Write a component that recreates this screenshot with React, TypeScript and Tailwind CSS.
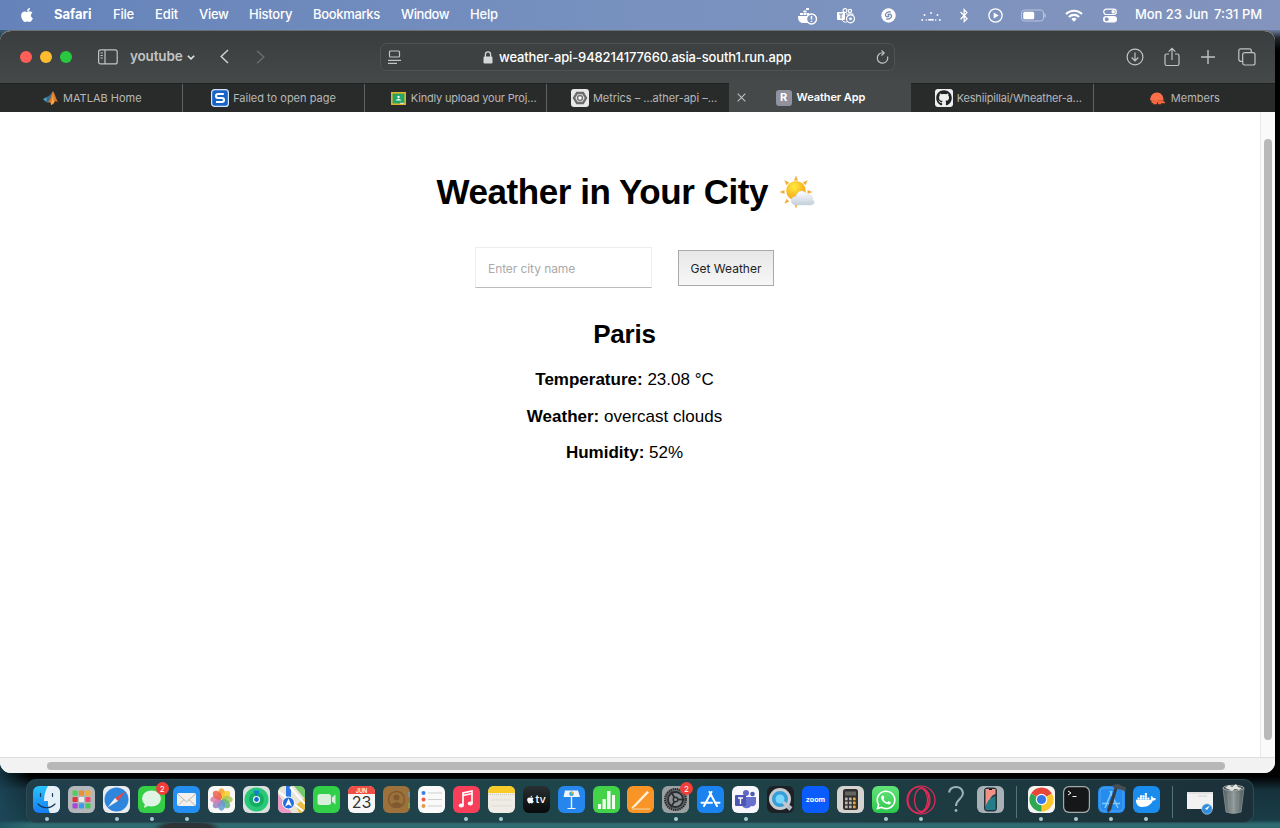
import type { ReactNode } from 'react';
import { FaApple, FaBluetoothB, FaDocker, FaGithub, FaWhatsapp } from 'react-icons/fa';

const menus = [
  { label: 'Safari', cls: 'w-[38px] font-bold' },
  { label: 'File', cls: 'w-[21px] tracking-[-0.2px]' },
  { label: 'Edit', cls: 'w-[23px] tracking-[-0.1px]' },
  { label: 'View', cls: 'w-[29px] tracking-[-0.3px]' },
  { label: 'History', cls: 'w-[43px] tracking-[-0.22px]' },
  { label: 'Bookmarks', cls: 'w-[67px] tracking-[-0.33px]' },
  { label: 'Window', cls: 'w-[48px] tracking-[-0.4px]' },
  { label: 'Help', cls: 'w-[27px] tracking-[-0.2px]' },
];

function MenuBar() {
  return (
    <header className="flex h-[30px] shrink-0 items-center bg-linear-to-r from-[#6583ba] via-[#7891bf] to-[#8394bd] text-[13px] font-medium text-white">
      <FaApple className="ml-[19px] mr-[19px] size-[16px]" />
      <nav className="flex gap-[21px]">
        {menus.map((m) => (
          <span key={m.label} className={`whitespace-nowrap ${m.cls}`}>{m.label}</span>
        ))}
      </nav>
      <div className="ml-auto flex items-center">
        <svg className="mr-[19px] mt-[2px] h-[17px] w-[21px]" viewBox="0 0 21 17">
          <path d="M1 8h12l1-1 2 1-3 5-3 2H5c-3-1-4-3-4-7zM3 5h3v2H3zM6.5 5h3v2h-3zM6.5 2.5h3v2h-3zM10 5h2v2h-2zM9 0h3v2H9z" fill="#fff" />
          <circle cx="14.500" cy="11" r="5" fill="#8095bf" stroke="#fff" strokeWidth="1.400" />
          <path d="M14.500 8v3.600M14.500 12.800v1.200" stroke="#fff" strokeWidth="1.400" />
        </svg>
        <svg className="mr-[25px] mt-[2px] h-[16px] w-[19px]" viewBox="0 0 19 16">
          <rect x="0" y="4" width="8" height="8" rx="1" fill="#fff" />
          <path d="M2 6h4M4 6v4.500" stroke="#8095bf" strokeWidth="1.200" />
          <circle cx="8" cy="2.600" r="1.900" fill="none" stroke="#fff" strokeWidth="1.200" />
          <circle cx="13" cy="3" r="1.600" fill="none" stroke="#fff" strokeWidth="1.200" />
          <path d="M9 6h7v3M5 12c1 2 3 2.500 5 2" fill="none" stroke="#fff" />
          <circle cx="13.500" cy="10.800" r="4" fill="#8095bf" stroke="#fff" strokeWidth="1.200" />
          <circle cx="13.500" cy="10.800" r="1.400" fill="#fff" />
        </svg>
        <svg className="mr-[25px] mt-[1px] size-[15px]" viewBox="0 0 15 15">
          <circle cx="7.500" cy="7.500" r="7.200" fill="#fff" />
          <path d="M9.500 4C7 3.200 3.800 5.500 4.500 7.600c.7 1.600 2.500 1.600 3.500.4M5.500 11c2.500.8 5.700-1.500 5-3.600C9.800 5.800 8 5.800 7 7" fill="none" stroke="#7286ad" strokeWidth="1.200" strokeLinecap="round" />
        </svg>
        <svg className="mr-[17px] mt-[2px] h-[12px] w-[20px]" viewBox="0 0 20 12" fill="#fff">
          <circle cx="3.500" cy="5" r=".95" /><circle cx="1.200" cy="10" r=".95" /><circle cx="10" cy="3" r=".95" /><circle cx="16.500" cy="5" r=".95" /><circle cx="18.800" cy="10" r=".95" /><circle cx="5.300" cy="10" r=".8" /><circle cx="14.700" cy="10" r=".8" /><rect x="7.300" y="9" width="5.400" height="1.600" />
        </svg>
        <FaBluetoothB className="mr-[18px] h-[15px] w-[12px]" />
        <svg className="mr-[18px] size-[15px]" viewBox="0 0 15 15">
          <circle cx="7.500" cy="7.500" r="6.600" fill="none" stroke="#fff" strokeWidth="1.300" />
          <path d="M5.700 4.500l5 3-5 3z" fill="#fff" />
        </svg>
        <svg className="mr-[19px] h-[13px] w-[25px]" viewBox="0 0 25 13">
          <rect x=".5" y="1" width="22" height="11" rx="3" fill="none" stroke="#b9c4dc" />
          <rect x="2.200" y="2.700" width="11" height="7.600" rx="1.500" fill="#fff" />
          <path d="M24 4.700v3.600" stroke="#c4cde1" strokeWidth="1.200" />
        </svg>
        <svg className="mr-[20px] h-[13px] w-[18px]" viewBox="0 0 18 13">
          <path d="M1 5a11.500 11.500 0 0 1 16 0M3.900 7.900a7.400 7.400 0 0 1 10.200 0" fill="none" stroke="#fff" strokeWidth="2.100" />
          <path d="M6.300 10a4 4 0 0 1 5.400 0L9 12.800z" fill="#fff" />
        </svg>
        <svg className="mr-[18px] h-[15px] w-[14px]" viewBox="0 0 14 15">
          <rect x=".7" y="1.200" width="12.600" height="5.300" rx="2.650" fill="none" stroke="#fff" strokeWidth="1.200" />
          <circle cx="10.200" cy="3.850" r="1.800" fill="#fff" />
          <rect x="0" y="8" width="14" height="6.500" rx="3.250" fill="#fff" />
          <circle cx="3.700" cy="11.250" r="1.900" fill="#8394bd" />
        </svg>
        <span className="w-[79px] whitespace-nowrap tracking-[-0.05px]">Mon 23 Jun</span>
        <span className="mr-[16px] w-[50px] whitespace-nowrap">7:31 PM</span>
      </div>
    </header>
  );
}

function Toolbar() {
  return (
    <div className="flex h-[52px] shrink-0 items-center bg-[linear-gradient(#3a3d3d,#454949)] text-[#c2c4c4]">
      <div className="ml-[20px] flex gap-[8px]">
        <i className="size-[12px] rounded-full bg-[#ff5f57]" />
        <i className="size-[12px] rounded-full bg-[#febc2e]" />
        <i className="size-[12px] rounded-full bg-[#28c840]" />
      </div>
      <svg className="ml-[26px] h-[16px] w-[20px]" viewBox="0 0 20 16" fill="none" stroke="currentColor" strokeWidth="1.200">
        <rect x=".6" y=".9" width="18.600" height="14" rx="2" />
        <path d="M7 1v14M2.500 4h2.300M2.500 6.500h2.300M2.500 9h2.300" />
      </svg>
      <span className="ml-[12px] mt-[-1px] w-[53px] whitespace-nowrap text-[13.500px] font-semibold tracking-[-0.15px]">youtube</span>
      <svg className="ml-[4px] mt-[1px] h-[5px] w-[8px]" viewBox="0 0 8 5" fill="none" stroke="#e1e2e2" strokeWidth="1.600"><path d="M.8.7L4 3.900 7.200.7" /></svg>
      <svg className="ml-[25px] mt-[-1px] h-[15px] w-[9px]" viewBox="0 0 9 15" fill="none" stroke="#d0d2d2" strokeWidth="1.500"><path d="M8 1L1.200 7.500 8 14" /></svg>
      <svg className="ml-[27px] mt-[-1px] h-[14px] w-[9px]" viewBox="0 0 9 14" fill="none" stroke="#6a6d6d" strokeWidth="1.500"><path d="M1 .8L7.800 7 1 13.200" /></svg>
      <div className="ml-[115px] flex h-[28px] w-[515px] items-center rounded-[7px] border border-[#505353] bg-[#3d4141]">
        <svg className="ml-[7px] h-[15px] w-[13px]" viewBox="0 0 13 15" fill="none" stroke="currentColor" strokeWidth="1.200"><rect x="1.500" y="1" width="10" height="6" rx="1" /><path d="M0 10.300h13M0 13.300h9" /></svg>
        <svg className="ml-[82px] h-[13px] w-[10px]" viewBox="0 0 10 13"><rect x=".5" y="5.500" width="9" height="7" rx="1.200" fill="#d6d7d7" /><path d="M2.400 6V3.500a2.600 2.600 0 0 1 5.200 0V6" fill="none" stroke="#d6d7d7" strokeWidth="1.300" /></svg>
        <span className="ml-[6px] mt-px w-[293px] whitespace-nowrap text-[13px] font-medium tracking-[-0.145px] text-white">weather-api-948214177660.asia-south1.run.app</span>
        <svg className="ml-auto mr-[5px] h-[15px] w-[13px]" viewBox="0 0 13 15" fill="none" stroke="currentColor" strokeWidth="1.200"><path d="M11.500 6.500a5.200 5.200 0 1 1-4.500-3.700M5.500.4L8.200 2.900 5.500 5.500" /></svg>
      </div>
      <svg className="ml-[231px] size-[18px]" viewBox="0 0 18 18" fill="none" stroke="currentColor" strokeWidth="1.200"><circle cx="9" cy="9" r="7.900" /><path d="M9 4.500v8.300M5.700 9.500L9 12.800l3.300-3.300" /></svg>
      <svg className="ml-[20px] mt-[-1px] h-[20px] w-[16px]" viewBox="0 0 16 20" fill="none" stroke="currentColor" strokeWidth="1.200"><path d="M5 7H2.800Q1 7 1 8.800v7.900q0 1.800 1.800 1.800h10.400q1.800 0 1.800-1.800V8.800Q15 7 13.200 7H11M8 13V1.500M4.700 4.700L8 1.400l3.300 3.300" /></svg>
      <svg className="ml-[21px] size-[14px]" viewBox="0 0 14 14" fill="none" stroke="currentColor" strokeWidth="1.400"><path d="M7 0v14M0 7h14" /></svg>
      <svg className="ml-[23px] size-[18px]" viewBox="0 0 18 18" fill="none" stroke="currentColor" strokeWidth="1.200"><rect x="4.700" y="4.700" width="12.300" height="12.300" rx="2" /><path d="M4.500 13.300H2.800Q.8 13.300.8 11.300V2.800Q.8.8 2.800.8h8.500q2 0 2 2v1.700" /></svg>
    </div>
  );
}

const tabs: { text: string; pad: string; cls: string; icon: ReactNode; active?: boolean }[] = [
  {
    text: 'MATLAB Home', pad: 'pl-[43px]', cls: 'ml-[5px]',
    icon: <svg className="size-[15px]" viewBox="0 0 15 15"><path d="M0 8l4-2 2 2-3 3z" fill="#4ea0c6" /><path d="M4 6l3-2 3-4-2 10-3 2-2-1z" fill="#376c8e" /><path d="M10 0c2 3 3 8 5 11-2-1-3-1-4 1-1 1-2 2-3 2 0-2-1-3-3-3 3-2 3-8 5-11z" fill="#dd752a" /><path d="M10 1l1 11-3 2c0-4 2-8 2-13z" fill="#f0ad42" /></svg>,
  },
  {
    text: 'Failed to open page', pad: 'pl-[28px]', cls: 'ml-[4px]',
    icon: <svg className="size-[18px]" viewBox="0 0 18 18"><rect x=".6" y=".6" width="16.800" height="16.800" rx="3" fill="#1763c8" stroke="#d5e4f8" strokeWidth="1.200" /><path d="M12.800 5H7Q5 5 5 7t2 2h4q2 0 2 2t-2 2H5" fill="none" stroke="#fff" strokeWidth="2.100" /></svg>,
  },
  {
    text: 'Kindly upload your Proj…', pad: 'pl-[25.500px]', cls: 'ml-[5px] tracking-[-0.18px]',
    icon: <svg className="h-[13px] w-[15px]" viewBox="0 0 15 13"><rect x=".8" y=".8" width="13.400" height="11.400" fill="#25a567" stroke="#edb927" strokeWidth="1.500" /><circle cx="7.500" cy="5" r="1.200" fill="#fff" /><path d="M4.500 8.500q3-3.500 6 0z" fill="#e5fff1" /><path d="M9 11.300h4" stroke="#e5e5e5" /></svg>,
  },
  {
    text: 'Metrics – …ather-api –…', pad: 'pl-[23.500px]', cls: 'ml-[4px] tracking-[-0.05px]',
    icon: <svg className="size-[18px]" viewBox="0 0 18 18"><rect width="18" height="18" rx="3" fill="#e8e8e8" /><path d="M6 4h6l3 5-3 5H6L3 9z" fill="none" stroke="#6d6d6d" strokeWidth="2.400" /><circle cx="9" cy="9" r="2.400" fill="#fff" stroke="#777" strokeWidth="1.500" /></svg>,
  },
  {
    text: 'Weather App', pad: 'pl-[30px]', cls: 'ml-[5px] font-semibold tracking-[-0.08px] text-white', active: true,
    icon: <span className="flex size-[16px] items-center justify-center rounded-[3px] bg-[#92929e] text-[11px] font-bold text-white">R</span>,
  },
  {
    text: 'Keshiipillai/Wheather-a…', pad: 'pl-[24px]', cls: 'ml-[4px] tracking-[-0.18px]',
    icon: <span className="flex size-[18px] items-center justify-center rounded-[3px] bg-[#eee]"><FaGithub className="size-[16px] text-[#202326]" /></span>,
  },
  {
    text: 'Members', pad: 'pl-[56px]', cls: 'ml-[6px]',
    icon: <svg className="h-[13px] w-[15px]" viewBox="0 0 15 13"><path d="M.2 8.500C0 3.500 3 .4 7 .4c4 0 6.500 3 6.500 8z" fill="#ff704a" /><path d="M1.500 8h7v2.500H7V12.300H3v-1.300H1.500zM8.500 8.500h5v1.200h1.500V11.300H11v1H8v-1.500h.5z" fill="#f0663f" /></svg>,
  },
];

function Tabs() {
  return (
    <div className="grid h-[29px] w-[1275px] shrink-0 grid-cols-7 text-[11px] font-normal text-[#b6b8b8]">
      {tabs.map((t, i) => (
        <div key={t.text} className={`flex items-center ${t.active ? 'bg-[#454949]' : 'border-t border-[#202222] bg-[#292b2b]'}`}>
          {i !== 0 && i !== 4 && i !== 5 && <i className="h-full w-px shrink-0 bg-[#606363]" />}
          {t.active && <svg className="ml-[8px] size-[9px]" viewBox="0 0 9 9"><path d="M.7.7l7.600 7.600M8.300.7L.7 8.300" stroke="#bfc1c1" strokeWidth="1.100" /></svg>}
          <div className={`flex flex-1 items-center ${t.pad}`}>
            {t.icon}
            <span className={`whitespace-nowrap ${t.cls}`}>{t.text}</span>
          </div>
        </div>
      ))}
    </div>
  );
}

function PartlySunny() {
  const rays = [0, 45, 90, 135, 180, 225, 270, 315];
  return (
    <svg className="h-[34px] w-[36px]" viewBox="0 0 36 34">
      <defs>
        <radialGradient id="sun" cx=".4" cy=".3"><stop stopColor="#ffed3e" /><stop offset="1" stopColor="#f9b421" /></radialGradient>
        <linearGradient id="cloud" x2="0" y2="1"><stop stopColor="#fff" /><stop offset="1" stopColor="#c3cfdb" /></linearGradient>
      </defs>
      {rays.map((r) => <path key={r} d="M15 5.500l2-5 2 5z" fill="#f1ae3c" transform={`rotate(${r} 17 17)`} />)}
      <circle cx="17" cy="15.800" r="9.800" fill="url(#sun)" />
      <path d="M17 30c-6.500 0-6.500-8.500 0-8.500 1-6.500 9.500-7.500 10.500-1 4-2 7 1 6 4.500 3 1 2 5-2 5z" fill="url(#cloud)" stroke="#d3dce5" strokeWidth=".5" />
    </svg>
  );
}

function WeatherPage() {
  return (
    <main className="flex h-[645px] w-[1261px] flex-col items-center border-r border-[#e9e9e9] bg-white pr-[11px] font-['Liberation_Sans',Arial,sans-serif] text-black">
      <div className="mt-[58px] ml-[2px] flex h-[44px] items-center">
        <h1 className="w-[342px] whitespace-nowrap text-[35px] leading-[44px] font-bold tracking-[-0.44px]">Weather in Your City</h1>
        <PartlySunny />
      </div>
      <form className="mt-[33px] flex items-center font-[Inter] text-[12px]">
        <input aria-label="City" placeholder="Enter city name" className="h-[41px] w-[177px] border border-[#ededed] border-b-[#bcbcbc] px-[12px] pt-[2px] tracking-[-0.08px] outline-none placeholder:text-[#aaa]" />
        <button type="button" className="ml-[26px] h-[36px] w-[96px] border border-[#aaa] bg-linear-to-b from-[#e7e7e7] to-[#f7f7f7] pt-[2px] whitespace-nowrap text-[#222]">Get Weather</button>
      </form>
      <h2 className="mt-[31px] text-[26px] leading-[30px] font-bold tracking-[-0.2px]">Paris</h2>
      <p className="mt-[21px] text-[17px] leading-[20px]"><b>Temperature:</b> 23.08 °C</p>
      <p className="mt-[17px] text-[17px] leading-[20px]"><b>Weather:</b> overcast clouds</p>
      <p className="mt-[16px] text-[17px] leading-[20px]"><b>Humidity:</b> 52%</p>
    </main>
  );
}

function Base({ fill, children }: { fill: string; children?: ReactNode }) {
  return (
    <svg className="size-[27px]" viewBox="0 0 27 27">
      <rect width="27" height="27" rx="6" fill={fill} />
      {children}
    </svg>
  );
}

const petals = ['#f6a026', '#f4ce2d', '#abc850', '#64b67b', '#619cd0', '#9a83c5', '#d77eac', '#ee6452'];
const squares = ['#54ce5a', '#eb8f35', '#f4ad31', '#e2343b', '#e9e9e9', '#ed4970', '#a34bd9', '#3e9aec', '#45c95c'];
const gearAngles = [0, 120, 240];

const apps: { name: string; icon: ReactNode; dot?: boolean; badge?: boolean }[] = [
  { name: 'Finder', dot: true, icon: <svg className="size-[27px]" viewBox="0 0 27 27"><defs><clipPath id="fc"><rect width="27" height="27" rx="6" /></clipPath><linearGradient id="fg" x2="0" y2="1"><stop stopColor="#29c4fb" /><stop offset="1" stopColor="#147df4" /></linearGradient></defs><g clipPath="url(#fc)"><path d="M0 0h27v27H0z" fill="url(#fg)" /><path d="M15 0c-3 5-4 10-4 15h4c0 5 0 8 2 12h10V0z" fill="#e5eff6" /><path d="M7.500 7.500v3M19.500 7.500v3M5 18c5 5 12 5 17 0" fill="none" stroke="#173a57" strokeWidth="1.200" strokeLinecap="round" /></g></svg> },
  { name: 'Launchpad', icon: <Base fill="#b4b7ba">{squares.map((c, i) => <rect key={i} x={4.500 + (i % 3) * 6.400} y={4.500 + Math.floor(i / 3) * 6.400} width="5.200" height="5.200" rx="1" fill={c} />)}</Base> },
  { name: 'Safari', dot: true, icon: <Base fill="#e8ecef"><circle cx="13.500" cy="13.500" r="12" fill="#2d86db" /><path d="M22.500 5.500L12 12l3 3z" fill="#e94842" /><path d="M4.500 21.500l7.500-9.500 3 3z" fill="#f1f1f1" /></Base> },
  { name: 'Messages', dot: true, badge: true, icon: <Base fill="#34cf46"><ellipse cx="13.500" cy="12.500" rx="9.500" ry="8" fill="#dff4e2" /><path d="M7 17l-1 5 6-3z" fill="#dff4e2" /></Base> },
  { name: 'Mail', dot: true, icon: <Base fill="#258ef1"><rect x="4" y="7" width="19" height="13" rx="2" fill="#f2f0ed" /><path d="M4.500 8l9 8 9-8M5 19.500l6-6M22 19.500l-6-6" fill="none" stroke="#b9b3ad" /></Base> },
  { name: 'Photos', icon: <Base fill="#f8f8f6">{petals.map((c, i) => <ellipse key={c} cx="13.500" cy="7.700" rx="3.700" ry="5.400" fill={c} opacity=".86" transform={`rotate(${i * 45} 13.5 13.5)`} />)}</Base> },
  { name: 'Find My', icon: <Base fill="#d9dfdd"><circle cx="13.500" cy="13.500" r="12" fill="#28c878" /><circle cx="13.500" cy="13.500" r="7.500" fill="#12ad61" /><path d="M10.500 4.500h6l-3 8z" fill="#147fd4" /><circle cx="13.500" cy="13.500" r="3.500" fill="#fff" /><circle cx="13.500" cy="13.500" r="2.400" fill="#1767d5" /></Base> },
  { name: 'Maps', icon: <Base fill="#e7e4d8"><path d="M16 0h5q6 0 6 6v7z" fill="#73c967" /><path d="M0 8l14 19H6q-6 0-6-6z" fill="#eb9ac3" /><path d="M18 19l9-7v9q0 6-6 6z" fill="#e9bd46" /><path d="M8 0h5v16H8z" fill="#2d77e4" /><path d="M0 5l25 20M12 1l15 17" stroke="#fff" strokeWidth="2" /><circle cx="10.500" cy="17" r="6" fill="#246ddb" stroke="#fff" /><path d="M10.500 12.500l3.500 8-3.500-2-3.500 2z" fill="#fff" /></Base> },
  { name: 'FaceTime', icon: <Base fill="#32cf48"><rect x="4.500" y="8" width="13.500" height="11" rx="2.500" fill="#d8efdb" /><path d="M19 11.500l3.500-3v10l-3.500-3z" fill="#d8efdb" /></Base> },
  { name: 'Calendar', icon: <Base fill="#f7f7f7"><path d="M0 8V6q0-6 6-6h15q6 0 6 6v2z" fill="#f04d47" /><text x="13.500" y="6.800" textAnchor="middle" fontFamily="Inter" fontSize="5.500" fontWeight="600" fill="#fff">JUN</text><text x="13.500" y="22" textAnchor="middle" fontFamily="Inter" fontSize="16" fill="#333">23</text></Base> },
  { name: 'Contacts', icon: <Base fill="#9c713c"><path d="M26 6v5" stroke="#7396aa" strokeWidth="1.500" /><path d="M26 17v5" stroke="#82a944" strokeWidth="1.500" /><circle cx="13.500" cy="13.500" r="8" fill="none" stroke="#80592e" strokeWidth="1.500" /><circle cx="13.500" cy="11.500" r="3" fill="#80592e" /><path d="M8 19q5.500-6 11 0-5 4-11 0z" fill="#80592e" /></Base> },
  { name: 'Reminders', icon: <Base fill="#fafafa"><circle cx="5.500" cy="7" r="2" fill="#377fe8" /><circle cx="5.500" cy="13.500" r="2" fill="#ed5a44" /><circle cx="5.500" cy="20" r="2" fill="#dc9f49" /><path d="M10 7h14M10 13.500h14M10 20h14" stroke="#cfcfcf" /></Base> },
  { name: 'Music', dot: true, icon: <Base fill="#f83f5a"><path d="M10 19V7l9-2v12M10 9.500l9-2" fill="none" stroke="#fff" strokeWidth="1.700" /><ellipse cx="8.300" cy="19.500" rx="2.600" ry="2.100" fill="#fff" /><ellipse cx="17.300" cy="17.500" rx="2.600" ry="2.100" fill="#fff" /></Base> },
  { name: 'Notes', dot: true, icon: <Base fill="#eeece5"><path d="M0 7V6q0-6 6-6h15q6 0 6 6v1z" fill="#f9cb28" /><path d="M0 8.500h27" stroke="#b9b4a5" strokeWidth=".6" strokeDasharray="1 1" /><path d="M3 14h21M3 20h21" stroke="#d8d5cd" strokeWidth=".6" /></Base> },
  { name: 'TV', icon: <div className="flex size-[27px] items-center justify-center rounded-[6px] bg-linear-to-b from-[#293033] to-[#080a0b] font-[Inter] text-[11px] font-medium text-white"><FaApple className="size-[9px]" /><span>tv</span></div> },
  { name: 'Keynote', icon: <Base fill="#2686ed"><path d="M7 4.500h13l2 6.500H5.500zM12.800 11h1.400v11h-1.400zM9.500 22h8v1h-8z" fill="#eff5fa" /><circle cx="13.500" cy="7.700" r="2.300" fill="#3caad5" /><path d="M13.500 7.700V5.400a2.300 2.300 0 0 1 2.300 2.300z" fill="#edb13c" /></Base> },
  { name: 'Numbers', icon: <Base fill="#42d348"><path d="M5 18h3v5H5zM9.500 13h3.300v10H9.500zM14 5h3.500v18H14zM19 9h3v14h-3z" fill="#f1fff1" /></Base> },
  { name: 'Pages', icon: <Base fill="#f89526"><path d="M5 21L20 5l2 1.500L8 21l-4 1.500z" fill="#fff1db" /><path d="M5 23h18" stroke="#f8d6a4" /></Base> },
  { name: 'Settings', dot: true, badge: true, icon: <Base fill="#9a9fa1"><circle cx="13.500" cy="13.500" r="10.500" fill="#62676a" stroke="#292d2f" strokeWidth="2" strokeDasharray="1.500 .7" /><circle cx="13.500" cy="13.500" r="7.500" fill="#8b8f91" stroke="#2b2e30" strokeWidth="1.800" /><circle cx="13.500" cy="13.500" r="2.300" fill="none" stroke="#2b2e30" strokeWidth="1.400" />{gearAngles.map((a) => <path key={a} d="M15.500 13.500h7" stroke="#2b2e30" strokeWidth="1.800" transform={`rotate(${a} 13.5 13.5)`} />)}</Base> },
  { name: 'App Store', icon: <Base fill="#1b83ef"><path d="M14.500 6L7 20M12.500 6L20 20M4.500 16.800h10.500M18 16.800h4.500" fill="none" stroke="#fff" strokeWidth="2" strokeLinecap="round" /></Base> },
  { name: 'Teams', dot: true, icon: <Base fill="#f7f7fb"><circle cx="14" cy="7" r="3" fill="#6169c7" /><circle cx="20.500" cy="8" r="2.300" fill="#5059b6" /><path d="M10 11h14v6q-1 4-5 3-2 3-6 2-3-1-3-4z" fill="#6870ce" /><rect x="3" y="9" width="11" height="11" rx="1" fill="#4d55b5" /><path d="M6 12h5M8.500 12v6" stroke="#fff" strokeWidth="1.300" /></Base> },
  { name: 'QuickTime', icon: <Base fill="#1d2024"><path d="M17 17l7 6" stroke="#b5bbc2" strokeWidth="4.500" /><circle cx="13" cy="13" r="9.500" fill="#349fda" stroke="#c7cacf" strokeWidth="3" /><circle cx="13" cy="13" r="4.500" fill="#79d7ff" /><path d="M16 16l4 3.500" stroke="#c2c7cd" strokeWidth="3" /></Base> },
  { name: 'Zoom', icon: <Base fill="#0b5cff"><text x="13.500" y="15.700" textAnchor="middle" fontFamily="Inter" fontSize="7.200" fontWeight="700" fill="#fff">zoom</text></Base> },
  { name: 'Calculator', icon: <Base fill="#d5d3cf"><rect x="6" y="3" width="15" height="21" rx="2.500" fill="#303030" /><path d="M8 5.500h11v4H8z" fill="#66645f" />{[0, 1, 2, 3, 4, 5, 6, 7, 8].map((i) => <rect key={i} x={8 + (i % 3) * 4} y={11.500 + Math.floor(i / 3) * 4} width="2.700" height="2.700" rx=".5" fill={i % 3 === 2 ? '#eba442' : '#b9b2a6'} />)}</Base> },
  { name: 'WhatsApp', dot: true, icon: <div className="flex size-[27px] items-center justify-center rounded-[6px] bg-linear-to-b from-[#61e379] to-[#29c84b]"><FaWhatsapp className="size-[22px] text-white" /></div> },
  { name: 'Opera GX', dot: true, icon: <svg className="size-[30px] shrink-0" viewBox="0 0 30 30" fill="none" stroke="#e82b59" strokeWidth="1.200"><circle cx="15" cy="15" r="14" /><ellipse cx="13" cy="15" rx="11" ry="13" /><ellipse cx="15" cy="15" rx="6.500" ry="11.500" /><path d="M17 4q6 3 6 11t-6 11" /></svg> },
  { name: 'Unknown', icon: <svg className="h-[27px] w-[18px]" viewBox="0 0 18 27" fill="none" stroke="#9fb4b8" strokeWidth="2"><path d="M2 6.500q1-5.500 7-5.500t7 6c0 6-7 6-7 13" /><circle cx="9" cy="24.500" r="1.400" fill="#9fb4b8" stroke="none" /></svg> },
  { name: 'iPhone Mirroring', icon: <Base fill="#a8b2b6"><rect x="7.500" y="2" width="12" height="23" rx="2.500" fill="#153d49" stroke="#293236" /><path d="M8.500 3h10v5q-6 2-6 9l-4 4z" fill="#ee9283" /><path d="M8.500 20q3-8 10-10v14h-10z" fill="#247c89" /><path d="M12 3.500h3" stroke="#111" /></Base> },
];

const openApps: { name: string; icon: ReactNode; dot?: boolean; badge?: boolean }[] = [
  { name: 'Chrome', dot: true, icon: <Base fill="#f5f5f3"><path d="M13.500 13.500L3.100 7.500a12 12 0 0 1 20.800 0z" fill="#e84638" /><path d="M13.500 13.500L23.900 7.500a12 12 0 0 1-10.400 18z" fill="#f9c72b" /><path d="M13.500 13.500v12A12 12 0 0 1 3.100 7.500z" fill="#31a653" /><circle cx="13.500" cy="13.500" r="5.700" fill="#fff" /><circle cx="13.500" cy="13.500" r="4.600" fill="#3479e6" /></Base> },
  { name: 'Terminal', dot: true, icon: <Base fill="#a5abaa"><rect x="1.200" y="1.200" width="24.600" height="24.600" rx="5" fill="#151719" /><path d="M5 5l3 2-3 2M9.500 10.500h4" fill="none" stroke="#fff" /></Base> },
  { name: 'Xcode', dot: true, icon: <svg className="h-[31px] w-[31px] shrink-0" viewBox="0 0 31 31"><rect x="2" y="2" width="27" height="27" rx="6" fill="#258ced" /><rect x="4" y="4" width="23" height="23" rx="4" fill="none" stroke="#57aaf4" strokeWidth=".8" /><path d="M16 7L9 24M14 7l8 17M6 19.500h18" stroke="#82caff" strokeWidth="1.500" fill="none" /><path d="M21.500 4L15 26l-3 3-1-3L19 3z" fill="#343c43" /><path d="M16 1.500q6-3 9 0l5 2-.5 4-5-2-6-1z" fill="#464e54" /></svg> },
  { name: 'Docker', dot: true, icon: <div className="flex size-[27px] items-center justify-center rounded-[6px] bg-[#198ced]"><FaDocker className="size-[20px] text-white" /></div> },
];

function DockItem({ app }: { app: { name: string; icon: ReactNode; dot?: boolean; badge?: boolean } }) {
  return (
    <div className="relative flex w-[34.960px] shrink-0 flex-col items-center">
      <div className="flex h-[27px] items-center justify-center">{app.icon}</div>
      {app.dot && <i className="mt-[4px] size-[4px] rounded-full bg-[#a9cbcf]" />}
      {app.badge && <span className="absolute -top-[4px] right-[0.500px] flex size-[13px] items-center justify-center rounded-full bg-[#f13e38] text-[8px] text-white">2</span>}
    </div>
  );
}

function Dock() {
  return (
    <footer className="mx-[26px] mt-[6px] flex h-[44px] w-[1228px] shrink-0 items-start rounded-[10px] border border-[#2d4b52] bg-linear-to-r from-[#213e4b] via-[#1d464a] to-[#1c3039] pt-[6px] pl-[2.300px]">
      {apps.map((a) => <DockItem key={a.name} app={a} />)}
      <i className="ml-[8px] mr-[7px] h-[32px] w-px bg-[#53747a]" />
      {openApps.map((a) => <DockItem key={a.name} app={a} />)}
      <i className="ml-[8px] mr-[14px] h-[32px] w-px bg-[#53747a]" />
      <svg className="mt-[5px] h-[24px] w-[27px]" viewBox="0 0 27 24"><path d="M0 1h26v17H0z" fill="#f1f2f1" /><path d="M0 2h26M11 5h9" stroke="#d0d0d0" /><circle cx="20" cy="18" r="5.300" fill="#328edb" stroke="#c6dce9" strokeWidth=".6" /><path d="M23 14.500l-5 3 2 1.500z" fill="#fff" /></svg>
      <svg className="ml-[8px] -mt-[2px] h-[31px] w-[23px]" viewBox="0 0 23 31"><defs><linearGradient id="bin"><stop stopColor="#525e62" /><stop offset=".5" stopColor="#929b9b" /><stop offset="1" stopColor="#4f5a5d" /></linearGradient></defs><path d="M1 4h21l-3 24q-7.500 3-15 0z" fill="url(#bin)" stroke="#919b9b" strokeWidth=".7" /><ellipse cx="11.500" cy="4" rx="10.500" ry="2.700" fill="#40494b" stroke="#a0a6a6" /><path d="M3 4l4-3 3 2 4-3 2 3 4 1-3 2-4-1-3 2-4-2z" fill="#e1e3df" /><path d="M6 9l1 17M11.500 9v18M17 9l-1 17" stroke="#b1b8b8" strokeWidth=".5" opacity=".5" /></svg>
    </footer>
  );
}

export default function App() {
  return (
    <div className="flex h-[828px] w-[1280px] flex-col overflow-hidden bg-[radial-gradient(ellipse_34px_8px_at_187px_828px,#2d3437_70%,transparent_100%),linear-gradient(to_right,#1d4b60b0,transparent_30px),linear-gradient(to_bottom,#6f7fa4_30px,#20242c_38px,#000_50px,#000_776px,#16313b_790px,#193d47_820px,#2e6a70_824px)] font-[Inter,sans-serif]">
      <MenuBar />
      <section className="flex h-[743px] w-[1275px] shrink-0 flex-col overflow-hidden rounded-[11px] border-t border-[#6b7073] bg-[#f5f5f5]">
        <Toolbar />
        <Tabs />
        <div className="flex">
          <WeatherPage />
          <div className="flex w-[14px] flex-col items-center bg-[#fafafa]"><i className="mt-[27px] h-[601px] w-[8px] rounded-full bg-[#b9b9b9]" /></div>
        </div>
        <div className="flex flex-1 items-center border-t border-[#dedede] bg-[#f2f2f2]"><i className="ml-[47px] h-[8px] w-[1178px] rounded-full bg-[#b7b7b7]" /></div>
      </section>
      <Dock />
    </div>
  );
}
